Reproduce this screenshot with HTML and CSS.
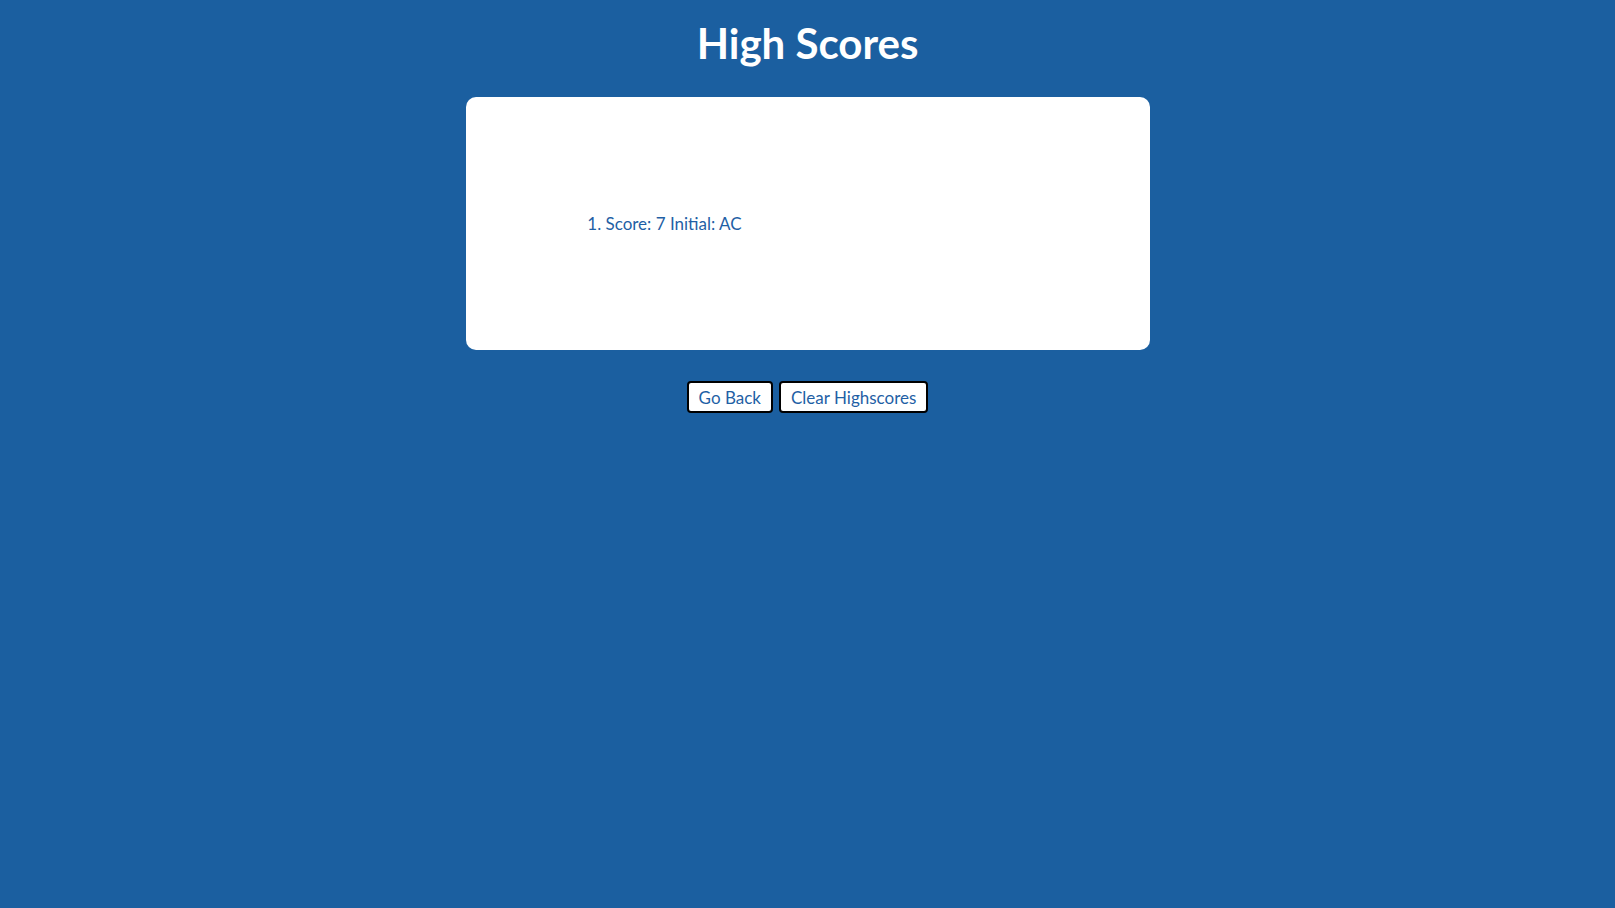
FILE: index.html
```html
<!DOCTYPE html>
<html lang="en">
<head>
<meta charset="utf-8">
<title>High Scores</title>
<link rel="stylesheet" href="styles.css">
</head>
<body>
  <h1 class="title">High Scores</h1>
  <main class="card">
    <ol class="scores">
      <li>Score: 7 Initial: AC</li>
    </ol>
  </main>
  <div class="actions">
    <button class="btn">Go Back</button>
    <button class="btn">Clear Highscores</button>
  </div>
</body>
</html>
```
FILE: styles.css
```css
* { box-sizing: border-box; }
html, body {
  margin: 0;
  padding: 0;
  background: #1b5fa0;
  font-family: Lato, "Open Sans", sans-serif;
  min-height: 100%;
}
body {
  display: flex;
  flex-direction: column;
  align-items: center;
}
.title {
  margin: 18px 0 0 0;
  font-size: 42px;
  line-height: 50px;
  font-weight: 700;
  color: #ffffff;
  height: 79px;
}
.card {
  width: 684px;
  height: 253px;
  background: #ffffff;
  border-radius: 10px;
  display: flex;
  align-items: center;
  padding-left: 122px;
}
.scores {
  margin: 0;
  padding-left: 18px;
  color: #1f5fa5;
  font-size: 17px;
  line-height: 20px;
}
.actions {
  display: flex;
  gap: 6px;
  margin-top: 31px;
}
.btn {
  font-family: inherit;
  font-size: 17px;
  color: #1f5fa5;
  background: #ffffff;
  border: 2px solid #000000;
  border-radius: 4px;
  height: 32px;
  padding: 0 10px;
}
```
